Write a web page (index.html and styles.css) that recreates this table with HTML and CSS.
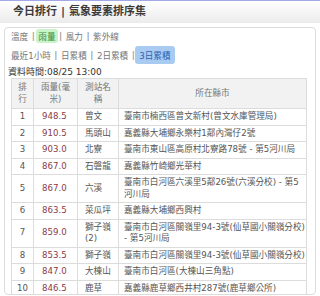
FILE: index.html
```html
<!DOCTYPE html>
<html lang="zh-Hant">
<head>
    <meta charset="UTF-8">
    <meta name="viewport" content="width=device-width, initial-scale=1.0">
    <title>今日排行 | 氣象要素排序集</title>
    <link rel="stylesheet" href="styles.css">
</head>
<body>
    <div class="header">
        <span>今日排行</span><span class="header-sep">|</span><span>氣象要素排序集</span>
    </div>

    <div class="panel">
        <div class="tabs">
            <a class="tab">溫度</a><span class="bar">|</span>
            <a class="tab tab-green">雨量</a><span class="bar">|</span>
            <a class="tab">風力</a><span class="bar">|</span>
            <a class="tab">紫外線</a>
        </div>
        <div class="tabs tabs-sub">
            <a class="tab">最近1小時</a><span class="bar">|</span>
            <a class="tab">日累積</a><span class="bar">|</span>
            <a class="tab">2日累積</a><span class="bar">|</span>
            <a class="tab tab-blue">3日累積</a>
        </div>

        <div class="data-time">資料時間:08/25 13:00</div>

        <table class="rank-table">
            <colgroup>
                <col class="c-rank">
                <col class="c-value">
                <col class="c-station">
                <col>
            </colgroup>
            <thead>
                <tr>
                    <th>排行</th>
                    <th>雨量(毫米)</th>
                    <th>測站名稱</th>
                    <th>所在縣市</th>
                </tr>
            </thead>
            <tbody>
                <tr><td class="rank">1</td><td class="value">948.5</td><td class="station">曾文</td><td class="addr">臺南市楠西區曾文新村(曾文水庫管理局)</td></tr>
                <tr><td class="rank">2</td><td class="value">910.5</td><td class="station">馬頭山</td><td class="addr">嘉義縣大埔鄉永樂村1鄰內灣仔2號</td></tr>
                <tr><td class="rank">3</td><td class="value">903.0</td><td class="station">北寮</td><td class="addr">臺南市東山區高原村北寮路78號 - 第5河川局</td></tr>
                <tr><td class="rank">4</td><td class="value">867.0</td><td class="station">石磐龍</td><td class="addr">嘉義縣竹崎鄉光華村</td></tr>
                <tr><td class="rank">5</td><td class="value">867.0</td><td class="station">六溪</td><td class="addr">臺南市白河區六溪里5鄰26號(六溪分校) - 第5河川局</td></tr>
                <tr><td class="rank">6</td><td class="value">863.5</td><td class="station">菜瓜坪</td><td class="addr">嘉義縣大埔鄉西興村</td></tr>
                <tr><td class="rank">7</td><td class="value">859.0</td><td class="station">獅子嶺(2)</td><td class="addr">臺南市白河區關嶺里94-3號(仙草國小關嶺分校) - 第5河川局</td></tr>
                <tr><td class="rank">8</td><td class="value">853.5</td><td class="station">獅子嶺</td><td class="addr">臺南市白河區關嶺里94-3號(仙草國小關嶺分校)</td></tr>
                <tr><td class="rank">9</td><td class="value">847.0</td><td class="station">大棟山</td><td class="addr">臺南市白河區(大棟山三角點)</td></tr>
                <tr><td class="rank">10</td><td class="value">846.5</td><td class="station">鹿草</td><td class="addr">嘉義縣鹿草鄉西井村287號(鹿草鄉公所)</td></tr>
            </tbody>
        </table>
    </div>
</body>
</html>
```

FILE: styles.css
```css
body {
    margin: 0;
    font-family: "DejaVu Sans", "Noto Sans CJK TC", sans-serif;
    font-size: 9px;
    color: #333;
    background-color: #fff;
    border-top: 1px solid #a3a8e6;
}
.header {
    height: 22px;
    line-height: 22px;
    padding-left: 13px;
    font-size: 11px;
    font-weight: bold;
    color: #3a3a3a;
    background: linear-gradient(#ffffff, #ebebeb);
}
.header-sep {
    margin: 0 4px;
    color: #2c3e50;
}
.panel {
    margin: 4px 4px 0 4px;
    border: 1px solid #dcdcdc;
    border-radius: 4px;
    padding: 0 8px 0 6px;
    height: 266px;
}
.tabs {
    display: flex;
    align-items: center;
    height: 15px;
    font-size: 8.6px;
    color: #777;
}
.tabs-sub {
    margin-top: 3px;
    height: 18px;
}
.tab {
    border-radius: 3px;
}
.bar {
    margin: 0 3.5px;
    font-weight: bold;
    color: #999;
}
.tab-green {
    margin: 0 -2px;
    padding: 1px 2px;
    background-color: #c9f3c9;
    color: #3f8f3f;
}
.tab-blue {
    margin-left: -3px;
    padding: 3px 4px;
    background-color: #a9cbf2;
    color: #2a62b0;
}
.data-time {
    margin: 2px 0 0 -3px;
    height: 12px;
    line-height: 12px;
    color: #333;
}
.rank-table {
    width: 100%;
    table-layout: fixed;
    border-collapse: collapse;
    border: 1px solid #dcdcdc;
    font-size: 8.6px;
}
.c-rank { width: 22px; }
.c-value { width: 44px; }
.c-station { width: 41px; }
.rank-table th,
.rank-table td {
    border: 1px solid #dcdcdc;
    line-height: 11.5px;
    padding: 2px 4px;
    font-weight: normal;
    vertical-align: middle;
}
.rank-table th {
    padding: 3px 4px;
    background-color: #f2f2f2;
    color: #777;
    text-align: center;
}
.rank {
    text-align: center;
    color: #555;
}
.value {
    padding-left: 8px !important;
    color: #8b3a4a;
}
.station {
    padding-left: 7px !important;
    color: #555;
}
.addr {
    padding-left: 5px !important;
    padding-right: 0 !important;
    color: #555;
}
```
